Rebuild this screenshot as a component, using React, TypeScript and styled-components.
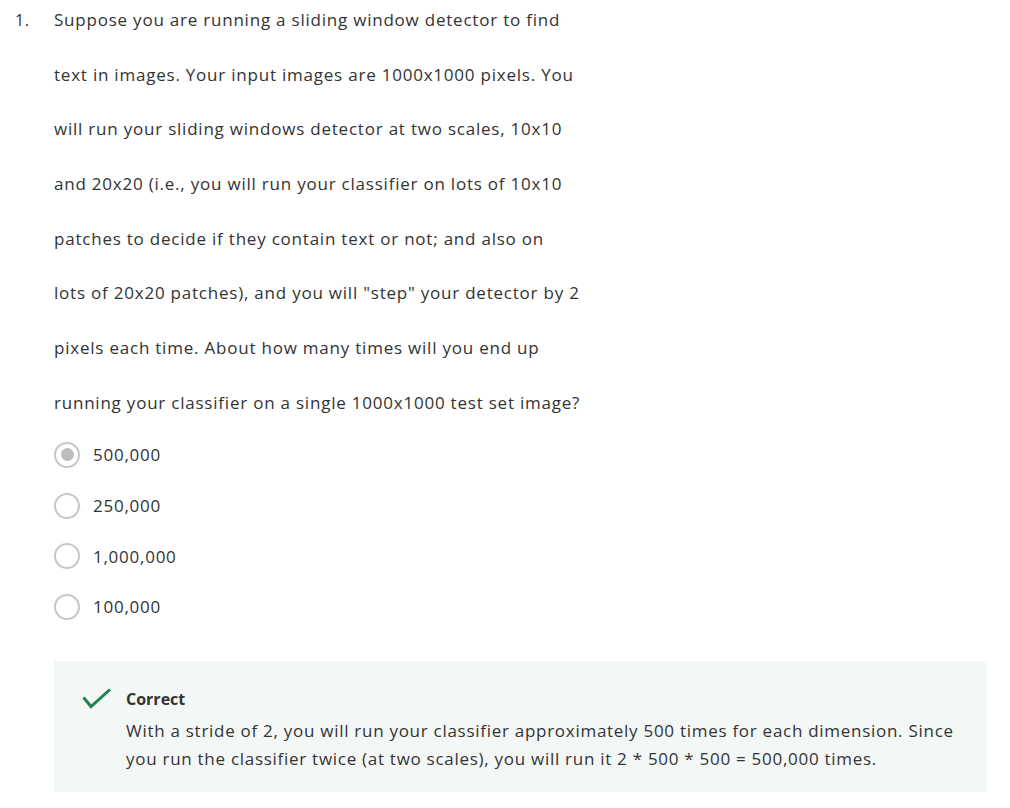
import React from "react";
import styled, { createGlobalStyle } from "styled-components";

const Global = createGlobalStyle`
  html, body { margin: 0; padding: 0; background: #ffffff; }
  body { font-family: "Open Sans", "Noto Sans", sans-serif; color: #333333; }
`;

const Page = styled.div`
  width: 1010px;
  padding: 8px 0 0 0;
  box-sizing: border-box;
`;

const Question = styled.div`
  display: flex;
  align-items: flex-start;
`;

const Number = styled.div`
  width: 54px;
  padding-left: 15px;
  box-sizing: border-box;
  font-size: 16px;
  letter-spacing: 0.6px;
  line-height: 24px;
  flex: none;
`;

const Body = styled.div`
  flex: 1;
  padding-right: 23px;
`;

const Prompt = styled.div`
  display: flex;
  flex-direction: column;
  gap: 30.7px;
`;

const PromptLine = styled.div`
  font-size: 17px;
  letter-spacing: 0.78px;
  line-height: 24px;
  white-space: nowrap;
`;

const Options = styled.div`
  display: flex;
  flex-direction: column;
  gap: 24.7px;
  margin-top: 27px;
`;

const Option = styled.label`
  display: flex;
  align-items: center;
  gap: 13px;
  height: 26px;
  font-size: 17px;
  letter-spacing: 0.75px;
`;

const Radio = styled.span<{ $checked?: boolean }>`
  width: 26px;
  height: 26px;
  box-sizing: border-box;
  border-radius: 50%;
  border: 2.5px solid #c7c7c7;
  display: flex;
  align-items: center;
  justify-content: center;
  flex: none;
  &::after {
    content: "";
    display: ${(p) => (p.$checked ? "block" : "none")};
    width: 13px;
    height: 13px;
    border-radius: 50%;
    background: #bdbdbd;
  }
`;

const Feedback = styled.div`
  margin-top: 41px;
  background: #f3f8f7;
  display: flex;
  align-items: flex-start;
  padding: 26px 20px 19px 28px;
  min-height: 131px;
  box-sizing: border-box;
`;

const CheckWrap = styled.div`
  width: 44px;
  flex: none;
  padding-top: 1px;
`;

const FeedbackText = styled.div`
  flex: 1;
`;

const Title = styled.div`
  font-size: 16px;
  font-weight: 700;
  line-height: 24px;
`;

const Explanation = styled.div`
  font-size: 17px;
  letter-spacing: 0.72px;
  line-height: 28px;
  margin-top: 6px;
`;

const lines = [
  "Suppose you are running a sliding window detector to find",
  "text in images. Your input images are 1000x1000 pixels. You",
  "will run your sliding windows detector at two scales, 10x10",
  "and 20x20 (i.e., you will run your classifier on lots of 10x10",
  "patches to decide if they contain text or not; and also on",
  'lots of 20x20 patches), and you will "step" your detector by 2',
  "pixels each time. About how many times will you end up",
  "running your classifier on a single 1000x1000 test set image?",
];

const options = ["500,000", "250,000", "1,000,000", "100,000"];

export default function App() {
  return (
    <Page>
      <Global />
      <Question>
        <Number>1.</Number>
        <Body>
          <Prompt>
            {lines.map((l) => (
              <PromptLine key={l}>{l}</PromptLine>
            ))}
          </Prompt>
          <Options>
            {options.map((o, i) => (
              <Option key={o}>
                <Radio $checked={i === 0} />
                {o}
              </Option>
            ))}
          </Options>
          <Feedback>
            <CheckWrap>
              <svg width="30" height="22" viewBox="0 0 30 22">
                <path d="M1.5 9.5 L9 18.5 L28 1.5" fill="none" stroke="#1f8354" strokeWidth="3" />
              </svg>
            </CheckWrap>
            <FeedbackText>
              <Title>Correct</Title>
              <Explanation>
                With a stride of 2, you will run your classifier approximately 500 times for each dimension. Since
                you run the classifier twice (at two scales), you will run it 2 * 500 * 500 = 500,000 times.
              </Explanation>
            </FeedbackText>
          </Feedback>
        </Body>
      </Question>
    </Page>
  );
}
